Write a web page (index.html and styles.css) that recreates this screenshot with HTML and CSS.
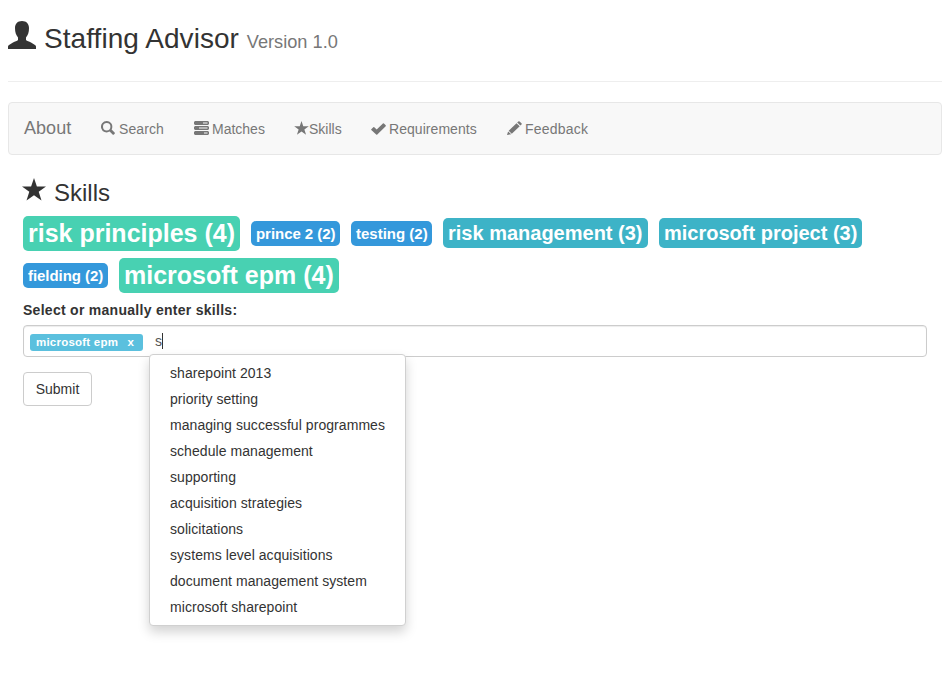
FILE: index.html
```html
<!DOCTYPE html>
<html lang="en">
<head>
<meta charset="utf-8">
<title>Staffing Advisor</title>
<link rel="stylesheet" href="styles.css">
</head>
<body>
<header class="page-header">
  <svg class="user-icon" viewBox="0 0 28 28"><path d="M14 0C9.500 0 7 2.800 7 7C7 11.500 8 14 10 16.500V19C9 20.300 7 20.500 5 21.500L1 24Q0 24.700 0 25.500V28H28V25.500Q28 24.700 27 24L23 21.500C21 20.500 19 20.300 18 19V16.500C20 14 21 11.500 21 7C21 2.800 18.500 0 14 0Z"/></svg>
  <h1><span class="name">Staffing Advisor</span> <small>Version 1.0</small></h1>
</header>
<nav class="navbar">
  <a class="brand">About</a>
  <a class="link search"><svg viewBox="0 0 14 14"><path fill-rule="evenodd" d="M5.700 0a5.700 5.700 0 1 0 2.900 10.600L11.600 13.600Q12.200 14.200 13 13.400L13.600 12.800Q14.200 12.100 13.600 11.500L10.600 8.500A5.700 5.700 0 0 0 5.700 0ZM5.700 2a3.700 3.700 0 1 1 0 7.400a3.700 3.700 0 0 1 0-7.400Z"/></svg><span>Search</span></a>
  <a class="link matches"><svg viewBox="0 0 15 14"><path fill-rule="evenodd" d="M1 0H14L15 1V3L14 4H1L0 3V1ZM9 1.500V2.500H13.500V1.500ZM1 5H14L15 6V8L14 9H1L0 8V6ZM5 6.500V7.500H13.500V6.500ZM1 10H14L15 11V13L14 14H1L0 13V11ZM10 11.500V12.500H13.500V11.500Z"/></svg><span>Matches</span></a>
  <a class="link skills"><svg viewBox="0 0 24 23"><path d="M12 0L14.900 8.500H24L16.700 13.800L19.500 22.500L12 17.200L4.500 22.500L7.300 13.800L0 8.500H9.100Z"/></svg><span>Skills</span></a>
  <a class="link requirements"><svg viewBox="0 0 15 12"><path d="M.3 6.300L2.300 4.300Q2.800 3.900 3.300 4.300L5.700 6.600L11.900.4Q12.400 0 12.900.4L14.700 2.200Q15.100 2.700 14.700 3.200L6.300 11.600Q5.700 12 5.200 11.600L.3 7.100Q0 6.700.3 6.300Z"/></svg><span>Requirements</span></a>
  <a class="link feedback"><svg viewBox="0 0 15 14"><path d="M11.300.5Q12 0 12.600.5L14.500 2.300Q15 2.900 14.500 3.500L13.400 4.500L10.200 1.500ZM9.500 2.200L12.700 5.200L4.800 12.800L1.700 9.800ZM1.100 10.400L4.200 13.300L0 14Z"/></svg><span>Feedback</span></a>
</nav>
<main>
  <h2><svg viewBox="0 0 24 23"><path d="M12 0L14.900 8.500H24L16.700 13.800L19.500 22.500L12 17.200L4.500 22.500L7.300 13.800L0 8.500H9.100Z"/></svg><span>Skills</span></h2>
  <div class="cloud">
    <span class="tag large risk-principles">risk principles (4)</span>
    <span class="tag small prince">prince 2 (2)</span>
    <span class="tag small testing">testing (2)</span>
    <span class="tag medium risk-management">risk management (3)</span>
    <span class="tag medium project">microsoft project (3)</span>
    <span class="tag small fielding">fielding (2)</span>
    <span class="tag large epm">microsoft epm (4)</span>
  </div>
  <div class="label"><span>Select or manually enter skills:</span></div>
  <div class="tags-input">
    <span class="token"><span>microsoft epm</span><span class="remove">x</span></span>
    <span class="entry">s<i class="caret"></i></span>
    <ul class="menu">
      <li><span>sharepoint 2013</span></li>
      <li><span>priority setting</span></li>
      <li><span>managing successful programmes</span></li>
      <li><span>schedule management</span></li>
      <li><span>supporting</span></li>
      <li><span>acquisition strategies</span></li>
      <li><span>solicitations</span></li>
      <li><span>systems level acquisitions</span></li>
      <li><span>document management system</span></li>
      <li><span>microsoft sharepoint</span></li>
    </ul>
  </div>
  <button class="submit" type="button">Submit</button>
</main>
</body>
</html>
```
FILE: styles.css
```css
* { box-sizing: border-box; }
body {
  min-height: 681px;
  margin: 0;
  padding: 0 6px 0 8px;
  background: #fff;
  color: #333;
  font: 14px/20px "Liberation Sans", Arial, sans-serif;
}
svg { display: block; flex: none; fill: currentColor; }
h1, h2 { margin: 0; font-weight: 400; }

.page-header {
  display: flex;
  align-items: flex-start;
  height: 82px;
  padding-top: 21px;
  border-bottom: 1px solid #eee;
}
.user-icon { width: 28px; height: 28px; }
h1 { margin: 1px 0 0 8px; font-size: 28px; line-height: 34px; }
h1 .name { letter-spacing: .06px; }
h1 small { font-size: 18.2px; color: #777; }

.navbar {
  display: flex;
  height: 53px;
  margin-top: 20px;
  padding-left: 15px;
  border: 1px solid #e7e7e7;
  border-radius: 4px;
  background: #f8f8f8;
  color: #777;
}
.brand { width: 77px; padding-top: 15px; font-size: 18px; letter-spacing: .05px; }
.link { display: flex; padding-top: 16px; }
.link svg { width: 15px; height: 14px; margin-top: 2px; }
.search { width: 93px; letter-spacing: .1px; }
.search svg { width: 14px; margin-right: 4px; }
.matches { width: 100px; }
.matches svg { margin-right: 3px; }
.skills { width: 77px; }
.skills svg { height: 14px; }
.requirements { width: 136px; letter-spacing: .05px; }
.requirements svg { height: 12px; margin-top: 4px; margin-right: 3px; }
.feedback { letter-spacing: .22px; }
.feedback svg { margin-right: 3px; }

main { padding: 0 15px; }
h2 { display: flex; height: 61px; padding-top: 23px; font-size: 24px; line-height: 30px; }
h2 svg { width: 24px; height: 23px; margin: 0 8px 0 -1px; }

.cloud { display: flex; flex-wrap: wrap; align-items: center; gap: 7px 11px; }
.tag {
  display: block;
  padding: 5px;
  border-radius: 5px;
  color: #fff;
  font-weight: 700;
  line-height: 1;
  white-space: nowrap;
}
.large { background: #48d1b2; font-size: 25px; }
.medium { margin-bottom: 1px; background: #3db3c7; font-size: 20px; }
.small { background: #3498db; font-size: 15px; }
.risk-principles { width: 217px; }
.prince { width: 89px; letter-spacing: -.05px; }
.testing { width: 81px; }
.risk-management { width: 205px; }
.project { width: 203px; }
.fielding { width: 85px; letter-spacing: -.05px; }
.epm { width: 220px; }

.label { margin-top: 7px; font-weight: 700; letter-spacing: .28px; }
.tags-input {
  position: relative;
  display: flex;
  align-items: center;
  height: 32px;
  margin-top: 5px;
  padding: 0 6px;
  border: 1px solid #ccc;
  border-radius: 4px;
  box-shadow: inset 0 1px 1px rgba(0, 0, 0, .075);
  color: #555;
}
.token {
  display: flex;
  width: 113px;
  height: 17px;
  margin-top: 2px;
  padding: 0 6px;
  border-radius: 3px;
  background: #5bc0de;
  color: #fff;
  font-size: 11.5px;
  font-weight: 700;
  line-height: 17px;
  letter-spacing: .22px;
}
.remove { margin-left: auto; margin-right: 3px; }
.entry { display: flex; margin-left: 12px; }
.caret { width: 1px; height: 16px; margin-top: 2px; background: #333; }
.menu {
  position: absolute;
  top: 28px;
  left: 125px;
  width: 257px;
  height: 272px;
  margin: 0;
  padding: 5px 0;
  border: 1px solid #d0d0d0;
  border-radius: 4px;
  background: #fff;
  box-shadow: 0 6px 12px rgba(0, 0, 0, .175);
  color: #333;
  letter-spacing: .06px;
  list-style: none;
}
.menu li { height: 26px; padding: 3px 20px; white-space: nowrap; }
.submit {
  display: block;
  width: 69px;
  height: 34px;
  margin-top: 15px;
  padding: 0;
  border: 1px solid #ccc;
  border-radius: 4px;
  background: #fff;
  color: #333;
  font: inherit;
}
```
